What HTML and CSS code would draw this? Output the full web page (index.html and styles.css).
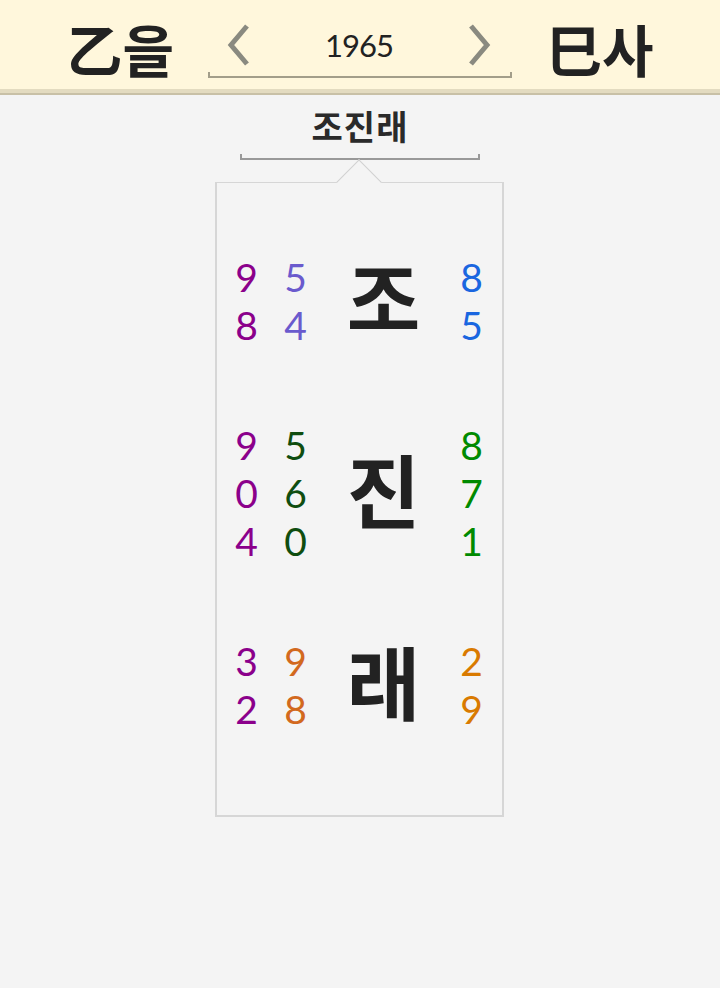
FILE: index.html
```html
<!DOCTYPE html>
<html lang="ko">
<head>
<meta charset="utf-8">
<link rel="stylesheet" href="styles.css">
</head>
<body>
<header class="top">
  <div class="gz">乙을</div>
  <div class="nav">
    <span class="chev">
      <svg width="26" height="44" viewBox="0 0 26 44"><polyline points="21,3 5,22 21,41" fill="none" stroke="#8a8a80" stroke-width="5"/></svg>
    </span>
    <span class="year">1965</span>
    <span class="chev">
      <svg width="26" height="44" viewBox="0 0 26 44"><polyline points="5,3 21,22 5,41" fill="none" stroke="#8a8a80" stroke-width="5"/></svg>
    </span>
  </div>
  <div class="gz">巳사</div>
</header>
<main class="main">
  <div class="title">조진래</div>
  <div class="bracket"></div>
  <section class="card">
    <div class="row">
      <div class="col c1"><span>9</span><span>8</span></div>
      <div class="col c2a"><span>5</span><span>4</span></div>
      <div class="ch">조</div>
      <div class="col c4a"><span>8</span><span>5</span></div>
    </div>
    <div class="row">
      <div class="col c1"><span>9</span><span>0</span><span>4</span></div>
      <div class="col c2b"><span>5</span><span>6</span><span>0</span></div>
      <div class="ch">진</div>
      <div class="col c4b"><span>8</span><span>7</span><span>1</span></div>
    </div>
    <div class="row">
      <div class="col c1"><span>3</span><span>2</span></div>
      <div class="col c2c"><span>9</span><span>8</span></div>
      <div class="ch">래</div>
      <div class="col c4c"><span>2</span><span>9</span></div>
    </div>
  </section>
</main>
</body>
</html>
```

FILE: styles.css
```css
html, body {
  margin: 0;
  padding: 0;
  background: #f4f4f4;
  font-family: "Noto Sans CJK KR", "Noto Sans", sans-serif;
}

.top {
  height: 89px;
  background: #fff7dc;
  border-bottom: 4px solid #e3dbc0;
  box-shadow: 0 2px 0 #c8c0a6;
  display: flex;
  justify-content: center;
  align-items: center;
  gap: 34px;
}

.gz {
  font-size: 56px;
  font-weight: 700;
  color: #222;
  line-height: 1;
  margin-top: 6px;
}

.nav {
  width: 304px;
  height: 50px;
  margin-top: 16px;
  border: 2px solid #a39e8a;
  border-top: none;
  display: flex;
  align-items: center;
  justify-content: space-between;
  padding: 0 18px 0 16px;
  box-sizing: border-box;
  position: relative;
}

.nav::before {
  content: "";
  position: absolute;
  left: -2px;
  right: -2px;
  top: 0;
  height: 44px;
  background: #fff7dc;
}

.chev, .year {
  position: relative;
  margin-top: -14px;
}

.chev svg { display: block; }

.year {
  font-family: Lato, "Noto Sans", sans-serif;
  font-size: 31px;
  font-weight: 400;
  color: #222;
  letter-spacing: -1px;
}

.main {
  display: flex;
  flex-direction: column;
  align-items: center;
  padding-top: 9px;
}

.title {
  font-size: 34px;
  font-weight: 700;
  color: #2a2a2a;
  line-height: 48px;
  letter-spacing: 1px;
}

.bracket {
  width: 240px;
  height: 6px;
  border: 2px solid #999;
  border-top: none;
  box-sizing: border-box;
  margin-top: 4px;
}

.card {
  margin-top: 22px;
  width: 289px;
  box-sizing: border-box;
  border: 2px solid #d6d6d6;
  border-top-width: 1px;
  padding: 70px 0 82px;
  display: flex;
  flex-direction: column;
  gap: 72px;
  position: relative;
  margin-left: -2px;
}

.card::before {
  content: "";
  position: absolute;
  top: -17px;
  left: 126px;
  width: 31px;
  height: 31px;
  background: #f4f4f4;
  border-left: 1px solid #d0d0d0;
  border-top: 1px solid #d0d0d0;
  transform: rotate(45deg);
}

.row {
  display: grid;
  grid-template-columns: 60px 38px 138px 38px;
  align-items: center;
}

.col {
  display: flex;
  flex-direction: column;
  align-items: center;
  font-family: Lato, "Noto Sans", sans-serif;
  font-size: 39px;
  font-weight: 400;
}

.col span {
  display: block;
  height: 48px;
  line-height: 48px;
}

.ch {
  text-align: center;
  font-size: 80px;
  font-weight: 700;
  color: #222;
  line-height: 1;
  margin-top: -12px;
}

.c1 { color: #8b008b; }
.c2a { color: #6a5acd; }
.c4a { color: #1a66e0; }
.c2b { color: #0f4d0f; }
.c4b { color: #008a00; }
.c2c { color: #d2691e; }
.c4c { color: #d97a00; }
```
